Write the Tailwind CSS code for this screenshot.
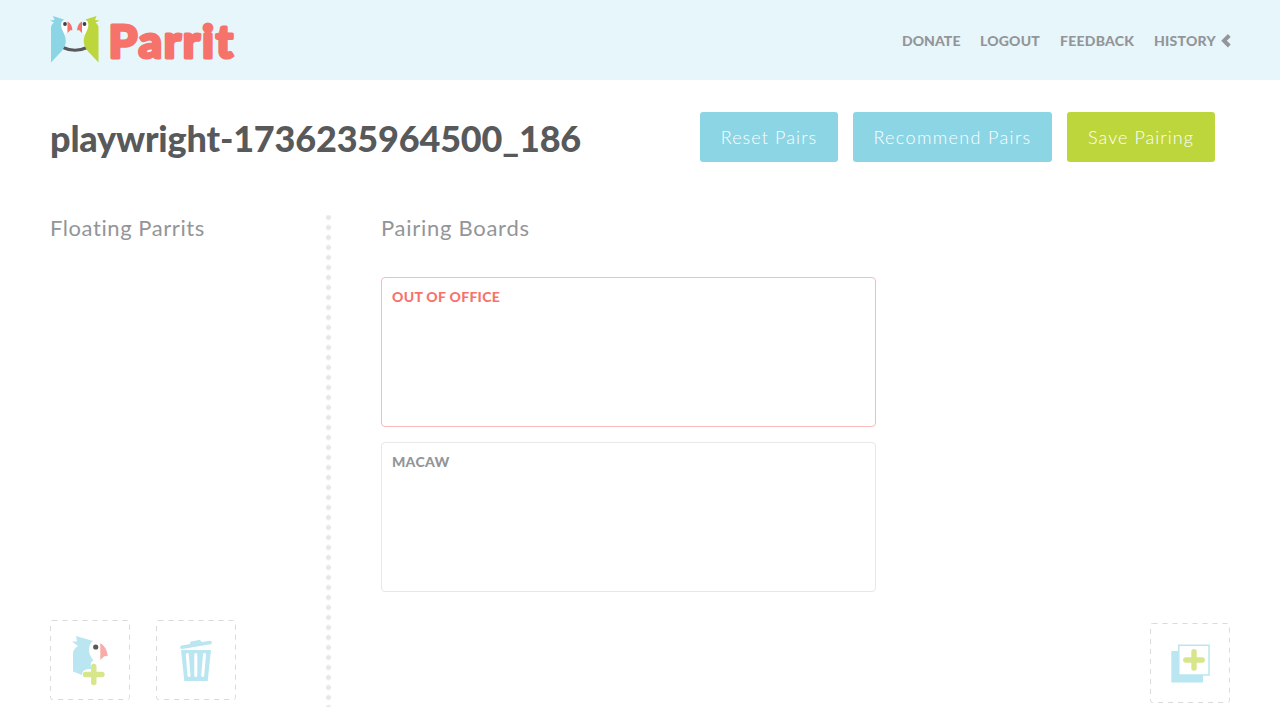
<!DOCTYPE html>
<html lang="en">
<head>
<meta charset="utf-8">
<title>Parrit</title>
<script src="https://cdn.jsdelivr.net/npm/@tailwindcss/browser@4"></script>
</head>
<body class="h-[720px] overflow-hidden bg-white font-['Lato',sans-serif] text-[#939598]">
<header class="flex h-20 items-center justify-between bg-[#e7f6fb] pl-[50px] pr-[49px]">
  <svg class="h-16 w-[190px] overflow-visible" viewBox="50 8 190 64" role="img" aria-label="Parrit">
    <path d="M63 47.500Q75 53 87 47.500" fill="none" stroke="#58595b" stroke-width="3.200"/>
    <g>
      <path d="M61 21C64 20.500 67 21 67 24V31.500L64.500 35L60 32Z" fill="#fff"/>
      <path d="M51 62.500V28C51 25.500 52 24 54 22.500L50 20.500L54.500 20L53 16L64 19.500L62 21.200C60.500 24 61 28 63 31.500C68 41 66 47 59 54Z" fill="#8bd5e5"/>
      <circle cx="65" cy="24" r="1.900" fill="#414042"/>
      <path d="M67.500 21.500Q72.500 24 72.300 30.500L70.500 30L67.500 33Z" fill="#f6736c"/>
    </g>
    <g transform="translate(149.500 0) scale(-1 1)">
      <path d="M61 21C64 20.500 67 21 67 24V31.500L64.500 35L60 32Z" fill="#fff"/>
      <path d="M51 62.500V28C51 25.500 52 24 54 22.500L50 20.500L54.500 20L53 16L64 19.500L62 21.200C60.500 24 61 28 63 31.500C68 41 66 47 59 54Z" fill="#bdd63c"/>
      <circle cx="65" cy="24" r="1.900" fill="#414042"/>
      <path d="M67.500 21.500Q72.500 24 72.300 30.500L70.500 30L67.500 33Z" fill="#f6736c"/>
    </g>
    <text x="108.500" y="57.500" font-family="Lato" font-weight="900" font-size="46" textLength="124.500" lengthAdjust="spacing" fill="#f6736c" stroke="#f6736c" stroke-width="3" stroke-linejoin="round">Parrit</text>
  </svg>
  <nav class="mt-0.5 flex items-center gap-5 text-[14px] leading-5 font-black whitespace-nowrap">
    <a class="w-[58px] tracking-[0.05px]">DONATE</a>
    <a class="w-[60px] tracking-[0.2px]">LOGOUT</a>
    <a class="w-[74px] tracking-[0.25px]">FEEDBACK</a>
    <a class="flex w-[77px] items-center justify-between"><span class="tracking-[0.25px]">HISTORY</span>
      <svg class="h-3.5 w-2.5" viewBox="0 0 10 14"><path d="M8.300 1.500L3 6.700L8.300 12" fill="none" stroke="#939598" stroke-width="3.900"/></svg></a>
  </nav>
</header>
<main>
  <section class="flex h-[135px] items-start justify-between pt-8 pr-[65px] pl-[50px]">
    <h1 class="mt-[3px] text-[36px] leading-[46px] font-black tracking-[-0.18px] whitespace-nowrap text-[#58595b]">playwright-1736235964500_186</h1>
    <div class="flex gap-[15px] text-[18px] font-light whitespace-nowrap text-white">
      <button class="h-[50px] w-[138px] rounded-[3px] bg-[#8bd5e5] tracking-[1.1px]">Reset Pairs</button>
      <button class="h-[50px] w-[199px] rounded-[3px] bg-[#8bd5e5] tracking-[1.35px]">Recommend Pairs</button>
      <button class="h-[50px] w-[148px] rounded-[3px] bg-[#bdd63c] tracking-[1.05px]">Save Pairing</button>
    </div>
  </section>
  <div class="flex h-[492px]">
    <section class="flex w-[326px] flex-col justify-between pl-[50px]">
      <h2 class="-mt-px text-[22px] leading-7 tracking-[0.57px]">Floating Parrits</h2>
      <div class="mb-[7px] flex gap-[26px]">
        <svg class="size-20" viewBox="0 0 80 80">
          <rect x=".5" y=".5" width="79" height="79" rx="2" fill="none" stroke="#d9dadb" stroke-dasharray="5 5"/>
          <path d="M23 51.500V34C23 30 25 28 28 26L22 21.500H27L26 16L43 21C39 24 38 30 40 35L43.500 41C40 41 41 44 41 49C36 49 32 50 32 55Z" fill="#b9e6f0"/>
          <circle cx="45.700" cy="27" r="2.600" fill="#58595b"/>
          <path d="M50.300 23Q57 27 57.700 36L54.200 36.200L50.300 40Z" fill="#faaba7"/>
          <path d="M43.800 46.500V62.500M35.500 54.500H52" fill="none" stroke="#d7e68a" stroke-width="5.400" stroke-linecap="round"/>
        </svg>
        <svg class="size-20" viewBox="0 0 80 80">
          <rect x=".5" y=".5" width="79" height="79" rx="2" fill="none" stroke="#d9dadb" stroke-dasharray="5 5"/>
          <path d="M26 27.300L54 22.500" stroke="#b9e6f0" stroke-width="3.600" stroke-linecap="round"/>
          <path d="M34 25L35 22L44 20.400L46 23Z" fill="#b9e6f0" stroke="#b9e6f0" stroke-linejoin="round"/>
          <path d="M25 30H55L51.700 61H28.300Z" fill="#b9e6f0"/>
          <path d="M31.300 34.500L33 55.500M39.800 34.500V55.500M48.500 34.500L46.700 55.500" stroke="#fff" stroke-width="3" stroke-linecap="round"/>
        </svg>
      </div>
    </section>
    <div class="w-[5px] bg-[radial-gradient(circle_at_center,#e6e7e8_2.300px,transparent_2.800px)] bg-[length:5px_10px] bg-[position:0_-2.500px]"></div>
    <section class="ml-[50px] w-[495px]">
      <h2 class="-mt-px text-[22px] leading-7 tracking-[0.72px]">Pairing Boards</h2>
      <div class="mt-[35px] h-[150px] rounded-[4px] border border-[#fababa] px-2.5 pt-[9px]">
        <h3 class="text-[14px] leading-5 font-black tracking-[0.3px] text-[#f6736c]">OUT OF OFFICE</h3>
      </div>
      <div class="mt-[15px] h-[150px] rounded-[4px] border border-[#e6e7e8] px-2.5 pt-[9px]">
        <h3 class="text-[14px] leading-5 font-black tracking-[0.3px]">MACAW</h3>
      </div>
    </section>
    <svg class="mt-auto mr-[50px] mb-1 ml-auto size-20" viewBox="0 0 80 80">
      <rect x=".5" y=".5" width="79" height="79" rx="2" fill="none" stroke="#d9dadb" stroke-dasharray="5 5"/>
      <path d="M21.300 28H53V59.500H21.300Z" fill="#b9e6f0"/>
      <path d="M28.800 22.200H59V52H28.800Z" fill="#fff" stroke="#b9e6f0" stroke-width="1.500"/>
      <path d="M44 28.700V45M35.800 37H52.200" stroke="#d7e68a" stroke-width="5.400" stroke-linecap="round"/>
    </svg>
  </div>
</main>
</body>
</html>
